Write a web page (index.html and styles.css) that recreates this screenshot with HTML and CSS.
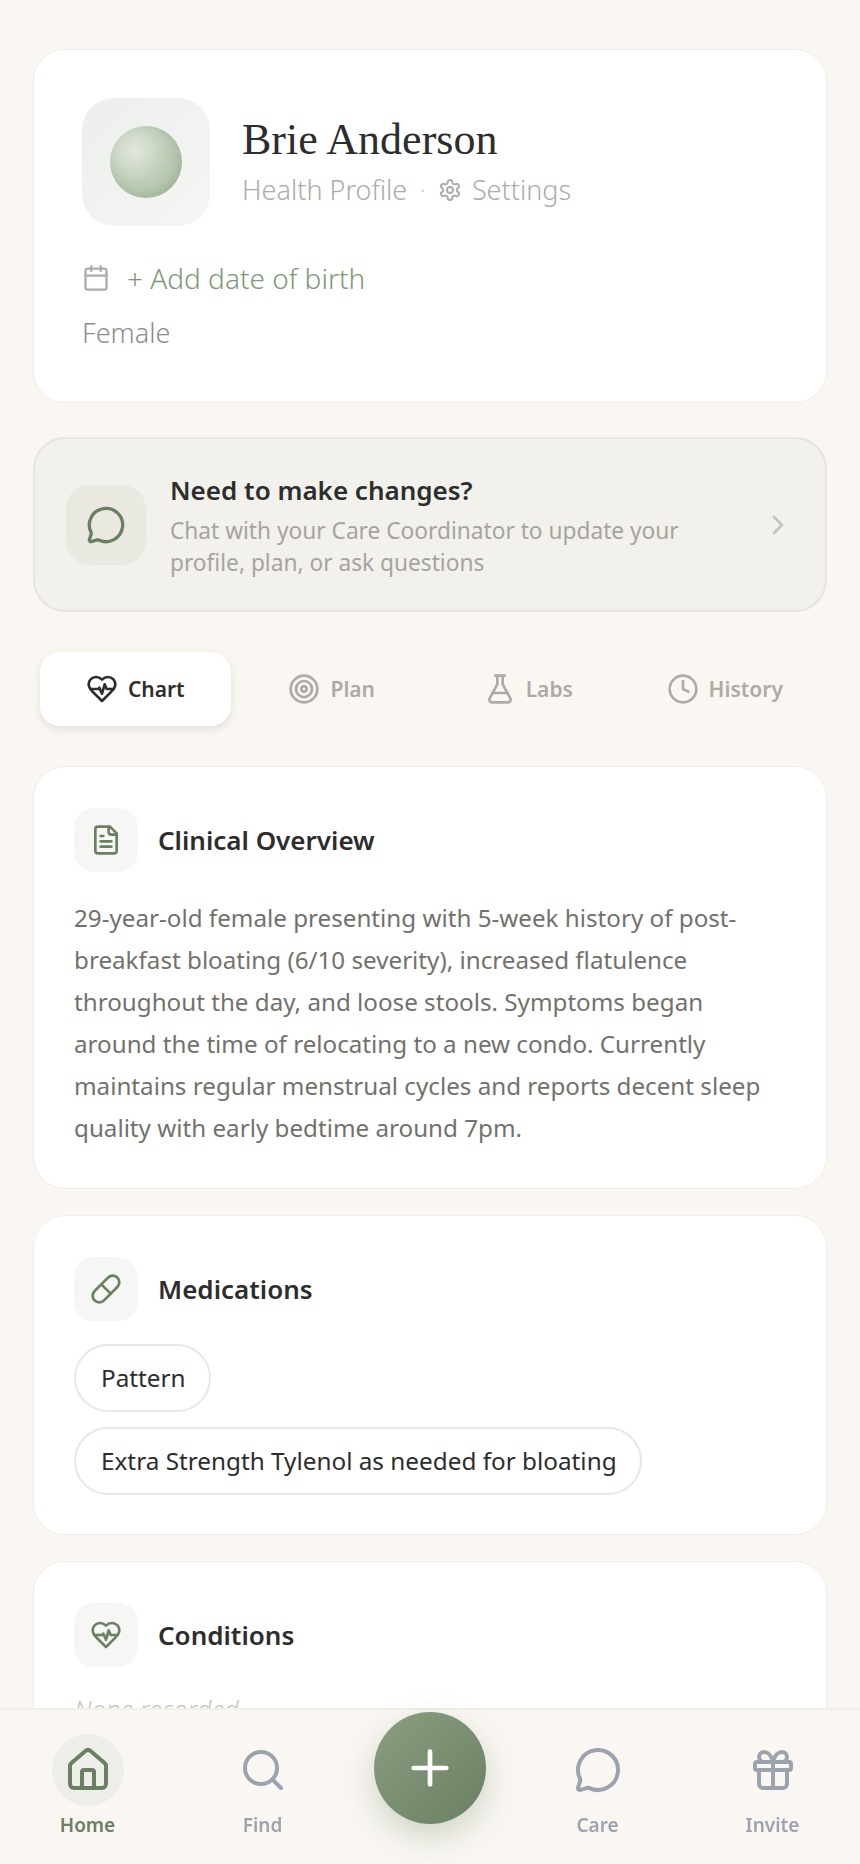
FILE: index.html
```html
<!DOCTYPE html>
<html lang="en">

<head>
    <meta charset="UTF-8">
    <meta name="viewport" content="width=device-width, initial-scale=1.0">
    <title>Health Profile</title>
    <link rel="stylesheet" href="styles.css">
</head>

<body>
    <main class="page">
        <section class="card profile">
            <div class="profile-top">
                <div class="avatar"><div class="orb"></div></div>
                <div>
                    <h1 class="name">Brie Anderson</h1>
                    <div class="profile-sub">
                        <span>Health Profile</span>
                        <span class="dot">·</span>
                        <svg class="ico gear" viewBox="0 0 24 24"><path d="M12.22 2h-.44a2 2 0 0 0-2 2v.18a2 2 0 0 1-1 1.73l-.43.25a2 2 0 0 1-2 0l-.15-.08a2 2 0 0 0-2.73.73l-.22.38a2 2 0 0 0 .73 2.73l.15.1a2 2 0 0 1 1 1.72v.51a2 2 0 0 1-1 1.74l-.15.09a2 2 0 0 0-.73 2.73l.22.38a2 2 0 0 0 2.73.73l.15-.08a2 2 0 0 1 2 0l.43.25a2 2 0 0 1 1 1.73V20a2 2 0 0 0 2 2h.44a2 2 0 0 0 2-2v-.18a2 2 0 0 1 1-1.73l.43-.25a2 2 0 0 1 2 0l.15.08a2 2 0 0 0 2.73-.73l.22-.39a2 2 0 0 0-.73-2.73l-.15-.08a2 2 0 0 1-1-1.74v-.5a2 2 0 0 1 1-1.74l.15-.09a2 2 0 0 0 .73-2.73l-.22-.38a2 2 0 0 0-2.73-.73l-.15.08a2 2 0 0 1-2 0l-.43-.25a2 2 0 0 1-1-1.73V4a2 2 0 0 0-2-2z"/><circle cx="12" cy="12" r="3"/></svg>
                        <span>Settings</span>
                    </div>
                </div>
            </div>
            <div class="birth">
                <svg class="ico cal" viewBox="0 0 24 24"><path d="M8 2v4"/><path d="M16 2v4"/><rect x="3" y="4" width="18" height="18" rx="2"/><path d="M3 10h18"/></svg>
                <span>+ Add date of birth</span>
            </div>
            <div class="gender">Female</div>
        </section>

        <section class="banner">
            <div class="banner-icon">
                <svg class="ico chat" viewBox="0 0 24 24"><path d="M2.992 16.342a2 2 0 0 1 .094 1.167l-1.065 3.29a1 1 0 0 0 1.236 1.168l3.413-.998a2 2 0 0 1 1.099.092 10 10 0 1 0-4.777-4.719"/></svg>
            </div>
            <div class="banner-text">
                <h2>Need to make changes?</h2>
                <p>Chat with your Care Coordinator to update your profile, plan, or ask questions</p>
            </div>
            <svg class="ico chev" viewBox="0 0 24 24"><path d="m9 18 6-6-6-6"/></svg>
        </section>

        <nav class="tabs">
            <div class="tab active">
                <svg class="ico" viewBox="0 0 24 24"><path d="M19 14c1.49-1.46 3-3.21 3-5.5A5.5 5.5 0 0 0 16.5 3c-1.76 0-3 .5-4.5 2-1.5-1.5-2.74-2-4.5-2A5.5 5.5 0 0 0 2 8.5c0 2.3 1.5 4.05 3 5.5l7 7Z"/><path d="M3.22 12H9.5l.5-1 2 4.5 2-7 1.5 3.5h5.27"/></svg>
                Chart
            </div>
            <div class="tab">
                <svg class="ico" viewBox="0 0 24 24"><circle cx="12" cy="12" r="10"/><circle cx="12" cy="12" r="6"/><circle cx="12" cy="12" r="2"/></svg>
                Plan
            </div>
            <div class="tab">
                <svg class="ico" viewBox="0 0 24 24"><path d="M14 2v6a2 2 0 0 0 .245.96l5.51 10.08A2 2 0 0 1 18 22H6a2 2 0 0 1-1.755-2.96l5.51-10.08A2 2 0 0 0 10 8V2"/><path d="M6.453 15h11.094"/><path d="M8.5 2h7"/></svg>
                Labs
            </div>
            <div class="tab">
                <svg class="ico" viewBox="0 0 24 24"><circle cx="12" cy="12" r="10"/><path d="M12 6v6l4 2"/></svg>
                History
            </div>
        </nav>

        <section class="card block">
            <div class="block-head">
                <div class="block-icon">
                    <svg class="ico" viewBox="0 0 24 24"><path d="M15 2H6a2 2 0 0 0-2 2v16a2 2 0 0 0 2 2h12a2 2 0 0 0 2-2V7Z"/><path d="M14 2v4a2 2 0 0 0 2 2h4"/><path d="M10 9H8"/><path d="M16 13H8"/><path d="M16 17H8"/></svg>
                </div>
                <h3>Clinical Overview</h3>
            </div>
            <p class="overview">29-year-old female presenting with 5-week history of post-breakfast bloating (6/10 severity), increased flatulence throughout the day, and loose stools. Symptoms began around the time of relocating to a new condo. Currently maintains regular menstrual cycles and reports decent sleep quality with early bedtime around 7pm.</p>
        </section>

        <section class="card block">
            <div class="block-head">
                <div class="block-icon">
                    <svg class="ico" viewBox="0 0 24 24"><path d="m10.5 20.5 10-10a4.95 4.95 0 1 0-7-7l-10 10a4.95 4.95 0 1 0 7 7Z"/><path d="m8.5 8.5 7 7"/></svg>
                </div>
                <h3>Medications</h3>
            </div>
            <div class="pills">
                <span class="pill">Pattern</span>
                <span class="pill">Extra Strength Tylenol as needed for bloating</span>
            </div>
        </section>

        <section class="card block">
            <div class="block-head">
                <div class="block-icon">
                    <svg class="ico" viewBox="0 0 24 24"><path d="M19 14c1.49-1.46 3-3.21 3-5.5A5.5 5.5 0 0 0 16.5 3c-1.76 0-3 .5-4.5 2-1.5-1.5-2.74-2-4.5-2A5.5 5.5 0 0 0 2 8.5c0 2.3 1.5 4.05 3 5.5l7 7Z"/><path d="M3.22 12H9.5l.5-1 2 4.5 2-7 1.5 3.5h5.27"/></svg>
                </div>
                <h3>Conditions</h3>
            </div>
            <p class="none">None recorded</p>
        </section>
    </main>

    <footer class="bottom-nav">
        <div class="nav-item current">
            <div class="nav-icon">
                <svg class="ico" viewBox="0 0 24 24"><path d="M15 21v-8a1 1 0 0 0-1-1h-4a1 1 0 0 0-1 1v8"/><path d="M3 10a2 2 0 0 1 .709-1.528l7-6a2 2 0 0 1 2.582 0l7 6A2 2 0 0 1 21 10v9a2 2 0 0 1-2 2H5a2 2 0 0 1-2-2z"/></svg>
            </div>
            Home
        </div>
        <div class="nav-item">
            <div class="nav-icon">
                <svg class="ico" viewBox="0 0 24 24"><path d="m21 21-4.34-4.34"/><circle cx="11" cy="11" r="8"/></svg>
            </div>
            Find
        </div>
        <div class="fab-cell">
            <div class="fab">
                <svg class="ico" viewBox="0 0 24 24"><path d="M5 12h14"/><path d="M12 5v14"/></svg>
            </div>
        </div>
        <div class="nav-item">
            <div class="nav-icon">
                <svg class="ico" viewBox="0 0 24 24"><path d="M2.992 16.342a2 2 0 0 1 .094 1.167l-1.065 3.29a1 1 0 0 0 1.236 1.168l3.413-.998a2 2 0 0 1 1.099.092 10 10 0 1 0-4.777-4.719"/></svg>
            </div>
            Care
        </div>
        <div class="nav-item">
            <div class="nav-icon">
                <svg class="ico" viewBox="0 0 24 24"><rect x="3" y="8" width="18" height="4" rx="1"/><path d="M12 8v13"/><path d="M19 12v7a2 2 0 0 1-2 2H7a2 2 0 0 1-2-2v-7"/><path d="M7.5 8a2.5 2.5 0 0 1 0-5A4.8 8 0 0 1 12 8a4.8 8 0 0 1 4.5-5 2.5 2.5 0 0 1 0 5"/></svg>
            </div>
            Invite
        </div>
    </footer>
</body>

</html>
```

FILE: styles.css
```css
* {
    margin: 0;
    padding: 0;
    box-sizing: border-box;
}

html,
body {
    height: 100%;
    overflow: hidden;
}

body {
    background: #faf7f2;
    color: #2d2d2d;
    font-family: "Noto Sans", "Open Sans", sans-serif;
}

.ico {
    fill: none;
    stroke: currentColor;
    stroke-width: 2;
    stroke-linecap: round;
    stroke-linejoin: round;
    flex-shrink: 0;
}

.page {
    padding: 49px 33px 0;
}

.card {
    background: #fff;
    border: 1px solid #f0eeea;
    border-radius: 32px;
}

/* profile */
.profile {
    height: 354px;
    padding: 48px;
}

.profile-top {
    display: flex;
    align-items: center;
    gap: 32px;
}

.avatar {
    width: 128px;
    height: 128px;
    border-radius: 32px;
    background: linear-gradient(135deg, #ebefeb, #f6f6f4);
    display: flex;
    align-items: center;
    justify-content: center;
}

.orb {
    width: 72px;
    height: 72px;
    border-radius: 50%;
    background: radial-gradient(circle at 35% 35%, #e3e8e0 0%, #bccbb5 50%, #b5c5ae 100%);
    box-shadow: inset -4px -4px 8px rgba(120, 140, 110, 0.3);
}

.name {
    font-family: "Liberation Serif", serif;
    font-size: 44px;
    font-weight: 400;
    line-height: 56px;
    margin-top: -4px;
    color: #2d2d2d;
}

.profile-sub {
    display: flex;
    align-items: center;
    gap: 12px;
    margin-top: 4px;
    font-size: 27px;
    font-weight: 300;
    line-height: 36px;
    color: #aeaca8;
}

.dot {
    color: #d4d2ce;
}

.gear {
    width: 24px;
    height: 24px;
    margin-right: -2px;
}

.birth {
    display: flex;
    align-items: center;
    gap: 17px;
    margin-top: 33px;
    font-size: 28px;
    font-weight: 300;
    line-height: 38px;
    color: #7f9877;
}

.cal {
    width: 28px;
    height: 28px;
    color: #aeaca8;
}

.gender {
    margin-top: 18px;
    font-size: 27px;
    font-weight: 300;
    line-height: 36px;
    color: #8f8d89;
}

/* banner */
.banner {
    display: flex;
    align-items: center;
    height: 175px;
    margin-top: 34px;
    padding: 0 31px;
    background: #f2f1ec;
    border: 2px solid #e6e5de;
    border-radius: 32px;
}

.banner-icon {
    width: 80px;
    height: 80px;
    border-radius: 24px;
    background: #e9e9e2;
    color: #6b7f63;
    display: flex;
    align-items: center;
    justify-content: center;
    flex-shrink: 0;
}

.chat {
    width: 40px;
    height: 40px;
}

.banner-text {
    flex: 1;
    margin-left: 24px;
    padding-top: 2px;
}

.banner-text h2 {
    font-size: 26px;
    font-weight: 600;
    line-height: 36px;
    color: #2d2d2d;
}

.banner-text p {
    margin-top: 7px;
    width: 530px;
    font-size: 22.7px;
    line-height: 32px;
    color: #a6a49f;
}

.chev {
    width: 32px;
    height: 32px;
    color: #c4c3be;
}

/* tabs */
.tabs {
    display: grid;
    grid-template-columns: repeat(4, 1fr);
    gap: 6px;
    margin: 40px 0;
    padding: 0 7px;
}

.tab {
    display: flex;
    align-items: center;
    justify-content: center;
    gap: 10px;
    height: 74px;
    font-size: 21px;
    font-weight: 600;
    color: #adaba7;
}

.tab .ico {
    width: 32px;
    height: 32px;
}

.tab.active {
    background: #fff;
    border-radius: 20px;
    color: #2d2d2d;
    box-shadow: 0 3px 8px rgba(0, 0, 0, 0.1);
}

/* content cards */
.block {
    margin-bottom: 26px;
    padding: 41px 40px 39px;
}

.block-head {
    display: flex;
    align-items: center;
    gap: 20px;
}

.block-icon {
    width: 64px;
    height: 64px;
    border-radius: 20px;
    background: #f6f6f4;
    color: #6b7f63;
    display: flex;
    align-items: center;
    justify-content: center;
}

.block-icon .ico {
    width: 32px;
    height: 32px;
}

.block-head h3 {
    font-size: 26px;
    font-weight: 600;
    color: #2d2d2d;
}

.overview {
    margin-top: 25px;
    font-size: 24.2px;
    line-height: 42px;
    color: #73716d;
}

.pills {
    display: flex;
    flex-direction: column;
    align-items: flex-start;
    gap: 15px;
    margin-top: 23px;
}

.pill {
    padding: 14px 23px 14px 25px;
    border: 2px solid #e8e7e3;
    border-radius: 34px;
    font-size: 24.3px;
    line-height: 36px;
    color: #2d2d2d;
}

.none {
    margin-top: 25px;
    font-size: 25.5px;
    font-style: italic;
    font-weight: 300;
    color: #c4c3be;
}

/* bottom nav */
.bottom-nav {
    position: fixed;
    left: 0;
    right: 0;
    bottom: 0;
    height: 156px;
    display: grid;
    grid-template-columns: 1fr 1fr 160px 1fr 1fr;
    background: #faf7f2;
    border-top: 2px solid #f3efe9;
}

.nav-item {
    display: flex;
    flex-direction: column;
    align-items: center;
    padding-top: 24px;
    font-size: 19px;
    font-weight: 600;
    line-height: 26px;
    color: #9ca3af;
}

.nav-icon {
    width: 72px;
    height: 72px;
    border-radius: 50%;
    display: flex;
    align-items: center;
    justify-content: center;
    margin-bottom: 6px;
}

.nav-icon .ico {
    width: 48px;
    height: 48px;
}

.nav-item.current {
    color: #6b7f63;
}

.current .nav-icon {
    background: #eeeee8;
}

.fab-cell {
    display: flex;
    justify-content: center;
    padding-top: 2px;
}

.fab {
    width: 112px;
    height: 112px;
    border-radius: 50%;
    background: linear-gradient(135deg, #8a9f80, #6b7f63);
    color: #fff;
    display: flex;
    align-items: center;
    justify-content: center;
    box-shadow: 0 12px 32px rgba(107, 127, 99, 0.3);
}

.fab .ico {
    width: 56px;
    height: 56px;
}
```
